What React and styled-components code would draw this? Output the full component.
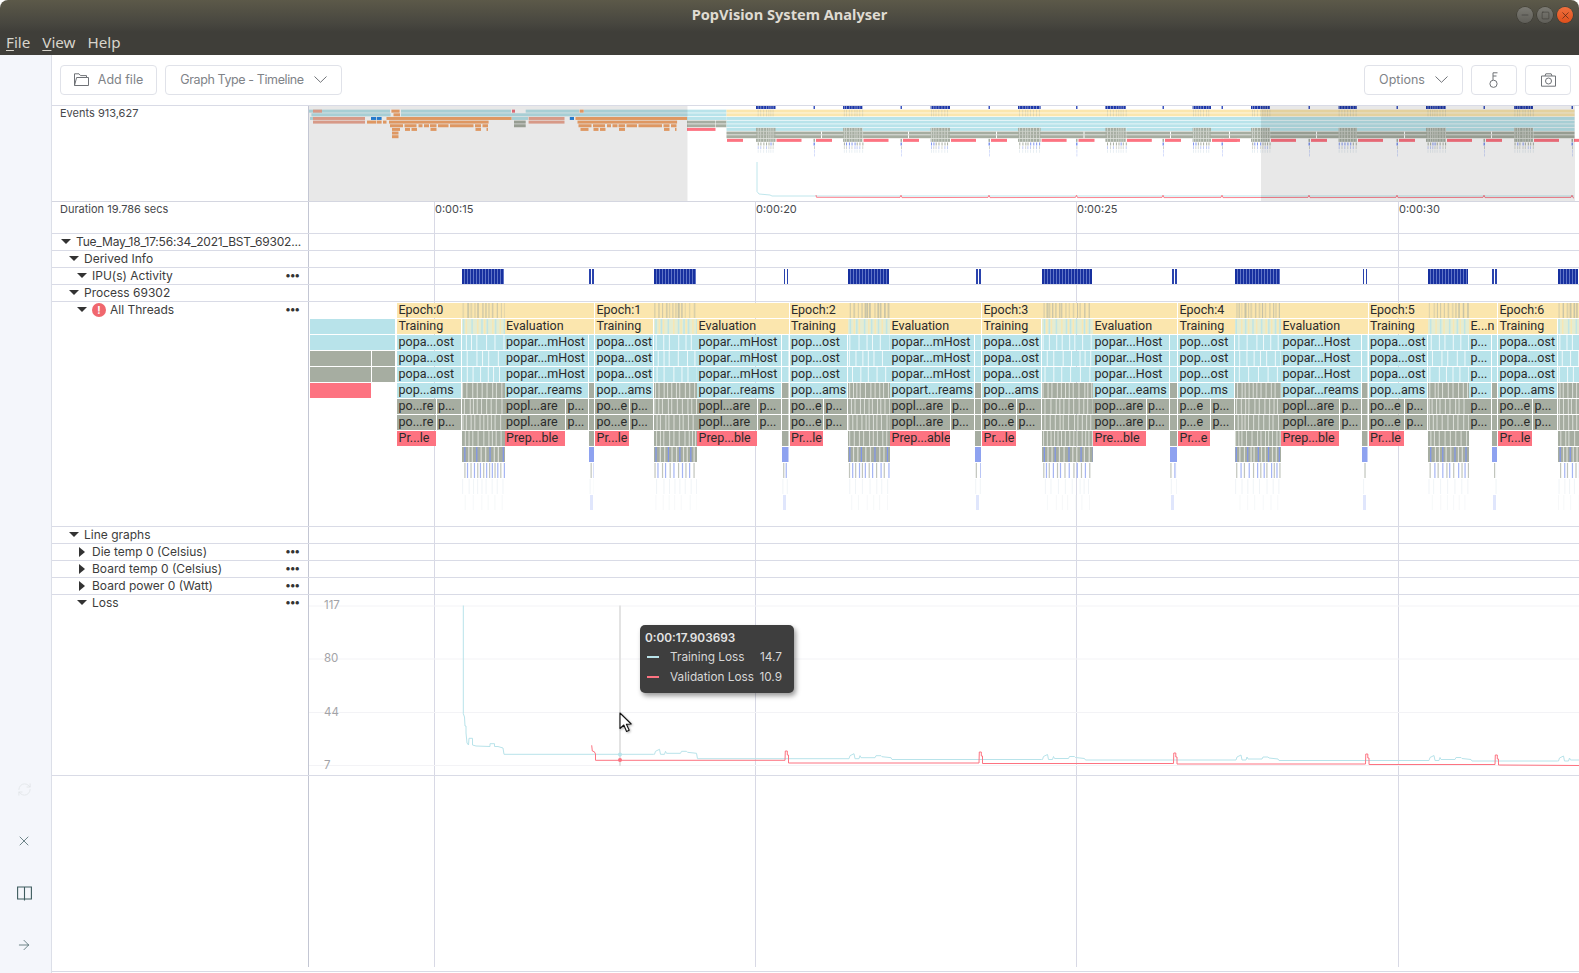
import React from 'react';
import styled, { createGlobalStyle } from 'styled-components';
import { Minus, Square, X, RefreshCw, ArrowRight } from 'lucide-react';

const CHART_X = 309;

const GlobalStyle = createGlobalStyle`
    html, body {
        margin: 0;
        padding: 0;
        background: #fff;
        overflow: hidden;
    }
    * { box-sizing: border-box; }
`;

const Root = styled.div`
    width: 1579px;
    height: 973px;
    display: flex;
    flex-direction: column;
    font-family: Inter, "Liberation Sans", sans-serif;
    color: #3c3c3c;
`;

const TitleBar = styled.div`
    height: 55px;
    flex: none;
    display: flex;
    flex-direction: column;
    border-radius: 8px 8px 0 0;
    background: linear-gradient(#5c5949 0, #47463f 24px, #3f3e39 32px);
`;

const TitleRow = styled.div`
    height: 30px;
    padding-bottom: 2px;
    position: relative;
    display: flex;
    align-items: center;
    justify-content: center;
    font-family: "Noto Sans", sans-serif;
    font-weight: 700;
    font-size: 14.6px;
    color: #dfdbd2;
`;

const WindowButtons = styled.div`
    position: absolute;
    right: 6px;
    top: 7px;
    display: flex;
    gap: 4px;
`;

const WindowButton = styled.div`
    width: 16px;
    height: 16px;
    border-radius: 50%;
    display: flex;
    align-items: center;
    justify-content: center;
    color: ${p => (p.$close ? '#4a2416' : '#3c3b36')};
    background: ${p => (p.$close ? 'linear-gradient(#f0703e, #df4f1b)' : 'linear-gradient(#7b7a73, #5f5e58)')};
    box-shadow: 0 0 0 0.5px rgba(0, 0, 0, 0.35);
`;

const MenuBar = styled.div`
    flex: 1;
    display: flex;
    align-items: center;
    gap: 12px;
    padding: 0 0 2px 6px;
    font-family: "Noto Sans", sans-serif;
    font-size: 15.2px;
    color: #d8d5cc;

    & u { text-underline-offset: 2px; }
`;

const Body = styled.div`
    flex: 1;
    display: flex;
    min-height: 0;
`;

const Sidebar = styled.div`
    width: 52px;
    flex: none;
    background: #f4f6fb;
    border-right: 1px solid #dcdfe8;
    display: flex;
    flex-direction: column;
    align-items: center;
    justify-content: flex-end;
    gap: 32px;
    padding: 0 3px 18px 0;
    color: #3d5b5e;
`;

const SideIcon = styled.div`
    height: 20px;
    display: flex;
    align-items: center;
    color: ${p => (p.$muted ? '#dfe3e6' : 'inherit')};
`;

const Main = styled.div`
    flex: 1;
    min-width: 0;
    display: flex;
    flex-direction: column;
`;

const Toolbar = styled.div`
    height: 51px;
    flex: none;
    display: flex;
    align-items: flex-start;
    padding: 10px 8px 0;
    gap: 8px;
    border-bottom: 1px solid #d9dbe6;
`;

const Spacer = styled.div`
    flex: 1;
`;

const ToolButton = styled.div`
    height: 30px;
    width: ${p => p.$w}px;
    padding-bottom: 1px;
    border: 1px solid #e0e2e9;
    border-radius: 4px;
    display: flex;
    align-items: center;
    justify-content: center;
    gap: ${p => p.$gap || 0}px;
    font-size: 12.5px;
    letter-spacing: ${p => p.$spacing || 0}px;
    color: #808388;
    background: #fff;
`;

const OverviewRow = styled.div`
    height: 96px;
    flex: none;
    display: grid;
    grid-template-columns: 257px 1fr;
    border-bottom: 1px solid #d4d6e0;
`;

const InfoLabel = styled.div`
    font-size: 11px;
    padding: 0 0 0 8px;
    color: #46484c;
`;

const OverviewChart = styled.div`
    border-left: 1px solid #c3c6d3;
    margin-left: -1px;
    height: 95px;
    overflow: hidden;

    & svg { display: block; }
`;

const Tracks = styled.div`
    flex: 1;
    position: relative;
    margin-bottom: 1px;
    border-bottom: 1px solid #d9dbe6;
`;

const TimeLine = styled.div.attrs(p => ({ style: { left: p.$x - 52 } }))`
    position: absolute;
    top: 0;
    bottom: 4px;
    width: 1px;
    background: ${p => (p.$strong ? '#c3c6d3' : '#d8d9e5')};
`;

const TrackRow = styled.div`
    position: relative;
    height: ${p => p.$h}px;
    display: grid;
    grid-template-columns: 257px 1fr;
    border-bottom: 1px solid #d9dbe6;
`;

const DurationTicks = styled.div`
    position: relative;
`;

const TickLabel = styled.span.attrs(p => ({ style: { left: p.$x - CHART_X + 1 } }))`
    position: absolute;
    top: 0;
    font-size: 11px;
    color: #46484c;
`;

const LabelCell = styled.div`
    height: 15px;
    display: flex;
    align-items: center;
    gap: 5px;
    padding-left: ${p => 9 + p.$level * 8}px;
    padding-right: 9px;
    font-size: 12px;
    letter-spacing: ${p => p.$spacing || 0}px;
    color: #3c3c3c;
    white-space: nowrap;
`;

const CaretDown = styled.span`
    flex: none;
    width: 0;
    height: 0;
    border-left: 5px solid transparent;
    border-right: 5px solid transparent;
    border-top: 5px solid #333;
`;

const CaretRight = styled.span`
    flex: none;
    width: 10px;
    height: 0;
    border-top: 5px solid transparent;
    border-bottom: 5px solid transparent;
    border-left: 6px solid #333;
    margin-left: 2px;
    margin-right: -2px;
`;

const ErrorBadge = styled.span`
    flex: none;
    width: 14px;
    height: 14px;
    margin-right: -1px;
    border-radius: 50%;
    background: #f0676e;
    color: #fff;
    font-size: 10px;
    font-weight: 700;
    display: flex;
    align-items: center;
    justify-content: center;
`;

const More = styled.span`
    margin-left: auto;
    font-family: "DejaVu Sans", sans-serif;
    font-size: 4.5px;
    letter-spacing: 0.7px;
    color: #333;
`;

const Canvas = styled.div`
    position: relative;
    overflow: hidden;
`;

const Bar = styled.div.attrs(p => ({
    style: { left: p.$x - CHART_X, width: p.$w, top: 1 + p.$row * 16 },
}))`
    position: absolute;
    height: 15px;
    line-height: 14px;
    padding-left: 1.5px;
    font-family: Roboto, "Liberation Sans", sans-serif;
    font-size: 12.5px;
    white-space: nowrap;
    overflow: hidden;
    color: #2b2b2b;
    background: ${p => p.$color};
`;

const Stripes = styled.svg.attrs(p => ({
    style: { left: p.$x - CHART_X, top: 1 + p.$row * 16 },
}))`
    position: absolute;
    display: block;
`;

const IpuBlock = styled.div.attrs(p => ({ style: { left: p.$x - CHART_X, width: p.$w } }))`
    position: absolute;
    top: 1px;
    height: 15px;
    background: repeating-linear-gradient(90deg, #17309f 0 2px, #5f74c6 2px 3px);
`;

const IpuTick = styled.div.attrs(p => ({ style: { left: p.$x - CHART_X } }))`
    position: absolute;
    top: 1px;
    height: 15px;
    width: 1.5px;
    background: #2a43ad;
`;

const LossCanvas = styled.div`
    position: relative;
`;

const LossPlot = styled.svg`
    position: absolute;
    left: 0;
    top: 0;
    display: block;
`;

const AxisLabel = styled.span.attrs(p => ({ style: { top: p.$y - 594 - 8 } }))`
    position: absolute;
    left: 15px;
    font-size: 11.5px;
    line-height: 14px;
    color: #a3a3a7;
`;

const Tooltip = styled.div`
    position: absolute;
    left: ${640 - CHART_X}px;
    top: ${624 - 594}px;
    width: 154px;
    height: 68px;
    padding: 6px 5px;
    border-radius: 5px;
    background: #3e3e3e;
    box-shadow: 2px 3px 5px rgba(0, 0, 0, 0.4);
    color: #e4e4e4;
    font-size: 11.8px;
`;

const TooltipTime = styled.div`
    font-weight: 600;
    line-height: 14px;
    margin-bottom: 2px;
`;

const TooltipRow = styled.div`
    display: flex;
    align-items: center;
    height: 20px;
    color: #d8d8d8;
`;

const Swatch = styled.span`
    width: 12px;
    height: 2px;
    margin: 0 11px 0 2px;
    background: ${p => p.$color};
`;

const TooltipValue = styled.span`
    margin-left: auto;
    padding-right: 7px;
`;

const Cursor = styled.svg`
    position: absolute;
    left: ${619 - CHART_X}px;
    top: ${711 - 594}px;
    z-index: 2;
    filter: drop-shadow(1px 1px 1px rgba(0, 0, 0, 0.3));
`;

// ---- data ----

const YELLOW = '#fbe6ae';
const BLUE = '#b8e3ea';
const GRAY = '#a6ada1';
const RED = '#fd7381';
const FAINT_BLUE = '#7f95ee';

const epochs = [
    { name: 'Epoch:0', s: 397, t: 436.5, a: 461.5, b: 504.5, e: 566, c: 589, n: 595, l: ['popa...ost', 'pop...ams', 'po...re', 'Pr...le'], v: ['popar...mHost', 'popar...reams', 'popl...are', 'Prep...ble'] },
    { name: 'Epoch:1', s: 595, t: 629.5, a: 653.5, b: 697, e: 758, c: 782, n: 789.5, l: ['popa...ost', 'pop...ams', 'po...e', 'Pr...le'], v: ['popar...mHost', 'popar...reams', 'popl...are', 'Prep...ble'] },
    { name: 'Epoch:2', s: 789.5, t: 824, a: 848, b: 890, e: 950.5, c: 975, n: 982, l: ['pop...ost', 'pop...ams', 'po...e', 'Pr...le'], v: ['popar...mHost', 'popart...reams', 'popl...are', 'Prep...able'] },
    { name: 'Epoch:3', s: 982, t: 1017, a: 1041.5, b: 1093, e: 1146.5, c: 1170, n: 1178, l: ['popa...ost', 'pop...ams', 'po...e', 'Pr...le'], v: ['popar...Host', 'popar...eams', 'pop...are', 'Pre...ble'] },
    { name: 'Epoch:4', s: 1178, t: 1211, a: 1235, b: 1281, e: 1340, c: 1362, n: 1368.5, l: ['pop...ost', 'pop...ms', 'p...e', 'Pr...e'], v: ['popar...Host', 'popar...reams', 'popl...are', 'Prep...ble'] },
    { name: 'Epoch:5', s: 1368.5, t: 1405, a: 1428, b: 1469, e: null, c: 1492, n: 1498, l: ['popa...ost', 'pop...ams', 'po...e', 'Pr...le'], v: ['p...', 'p...', 'p...', null], short: 'E...n' },
    { name: 'Epoch:6', s: 1498, t: 1533, a: 1557.5, b: 1620, e: 1660, c: 1680, n: 1690, l: ['popa...ost', 'pop...ams', 'po...e', 'Pr...le'], v: ['', '', '', ''] },
];

// small seeded generator so the stripes look irregular but stay the same between renders
const seeded = seed => {
    let v = seed * 9301 + 49297;
    return () => {
        v = (v * 9301 + 49297) % 233280;
        return v / 233280;
    };
};

const stripeXs = (rnd, w, min, max) => {
    const xs = [];
    let x = rnd() * min;
    while (x < w) {
        xs.push(x);
        x += min + rnd() * (max - min);
    }
    return xs;
};

const BlockStripes = ({ x, w, seed, small }) => {
    const rnd = seeded(seed);
    const rows = [];
    const first = small ? 2 : 0;
    const rect = (key, rx, row, rw, fill, op = 1) => (
        <rect key={key} x={rx} y={(row - first) * 16} width={rw} height={15} fill={fill} opacity={op} />
    );
    if (!small) {
        stripeXs(rnd, w, 2, 5).forEach((sx, i) => rows.push(rect(`a${i}`, sx, 0, 1 + rnd(), GRAY, 0.25 + rnd() * 0.4)));
        rows.push(rect('b', 0, 1, w, '#e4ecd2'));
        stripeXs(rnd, w, 2, 6).forEach((sx, i) => rows.push(rect(`c${i}`, sx, 1, 1.5, i % 2 ? YELLOW : BLUE, 0.8)));
    }
    [2, 3, 4].forEach(r => {
        rows.push(rect(`d${r}`, 0, r, w, BLUE));
        if (!small) stripeXs(rnd, w, 5, 10).forEach((sx, i) => rows.push(rect(`e${r}${i}`, sx, r, 1, '#fff', 0.8)));
    });
    [5, 6, 7, 8].forEach(r => {
        rows.push(rect(`f${r}`, 0, r, w, GRAY));
        if (!small) stripeXs(rnd, w, 3, 6).forEach((sx, i) => rows.push(rect(`g${r}${i}`, sx, r, 1, '#e3e6e0', 0.9)));
    });
    rows.push(rect('h', 0, 9, w, small ? '#8ea2f0' : GRAY));
    if (!small) {
        stripeXs(rnd, w, 3, 5).forEach((sx, i) => rows.push(rect(`i${i}`, sx, 9, 1.2, i % 3 === 0 ? '#7c92ee' : '#dfe2dc', 0.95)));
    }
    stripeXs(rnd, w, 2.5, 5).forEach((sx, i) => rows.push(rect(`j${i}`, sx, 10, 1.2, i % 2 ? FAINT_BLUE : GRAY, 0.7)));
    stripeXs(rnd, w, 4, 8).forEach((sx, i) => rows.push(rect(`k${i}`, sx, 11, 1, '#e6edf2', 0.6)));
    if (small) rows.push(rect('l', 1, 12, Math.min(w, 3), '#ccd6fa', 0.6));
    else stripeXs(rnd, w, 5, 9).forEach((sx, i) => rows.push(rect(`m${i}`, sx, 12, 1, '#f2f5f7', 0.7)));
    return (
        <Stripes $x={x} $row={first} width={w} height={(13 - first) * 16}>
            {rows}
        </Stripes>
    );
};

const FlameChart = () => (
    <Canvas>
        <Bar $x={310} $w={85} $row={1} $color={BLUE} />
        <Bar $x={310} $w={85} $row={2} $color={BLUE} />
        <Bar $x={310} $w={61} $row={3} $color={GRAY} />
        <Bar $x={372} $w={23} $row={3} $color={GRAY} />
        <Bar $x={310} $w={61} $row={4} $color={GRAY} />
        <Bar $x={372} $w={23} $row={4} $color={GRAY} />
        <Bar $x={310} $w={61} $row={5} $color={RED} />
        {epochs.map((ep, i) => (
            <React.Fragment key={ep.name}>
                <Bar $x={ep.s} $w={ep.n - ep.s - 1} $row={0} $color={YELLOW}>{ep.name}</Bar>
                <Bar $x={ep.s} $w={ep.a - ep.s - 0.5} $row={1} $color={YELLOW}>Training</Bar>
                {[2, 3, 4].map(r => (
                    <Bar key={r} $x={ep.s} $w={ep.a - ep.s - 1} $row={r} $color={BLUE}>{ep.l[0]}</Bar>
                ))}
                <Bar $x={ep.s} $w={ep.a - ep.s - 1} $row={5} $color={BLUE}>{ep.l[1]}</Bar>
                {[6, 7].map(r => (
                    <React.Fragment key={r}>
                        <Bar $x={ep.s} $w={ep.t - ep.s - 1} $row={r} $color={GRAY}>{ep.l[2]}</Bar>
                        <Bar $x={ep.t} $w={ep.a - ep.t - 1} $row={r} $color={GRAY}>p...</Bar>
                    </React.Fragment>
                ))}
                <Bar $x={ep.s} $w={ep.t - ep.s - 1} $row={8} $color={RED}>{ep.l[3]}</Bar>
                <BlockStripes x={ep.a} w={Math.min(ep.b - ep.a, 1579 - ep.a)} seed={i + 3} />
                {ep.b < 1579 && (
                    <>
                        <Bar $x={ep.b} $w={ep.n - ep.b - 1} $row={1} $color={YELLOW}>{ep.short || 'Evaluation'}</Bar>
                        {[2, 3, 4].map(r => (
                            <Bar key={r} $x={ep.b} $w={ep.c - ep.b - 1} $row={r} $color={BLUE}>{ep.v[0]}</Bar>
                        ))}
                        <Bar $x={ep.b} $w={ep.c - ep.b - 1} $row={5} $color={BLUE}>{ep.v[1]}</Bar>
                        {[6, 7].map(r => (
                            <React.Fragment key={r}>
                                <Bar $x={ep.b} $w={(ep.e || ep.c) - ep.b - 1} $row={r} $color={GRAY}>{ep.v[2]}</Bar>
                                {ep.e && <Bar $x={ep.e} $w={ep.c - ep.e - 1} $row={r} $color={GRAY}>p...</Bar>}
                            </React.Fragment>
                        ))}
                        {ep.e && <Bar $x={ep.b} $w={ep.e - ep.b - 1} $row={8} $color={RED}>{ep.v[3]}</Bar>}
                        <BlockStripes x={ep.c} w={ep.n - ep.c - 1} seed={i + 31} small />
                    </>
                )}
            </React.Fragment>
        ))}
    </Canvas>
);

const overviewBlocks = [
    [756, 775.5], [843, 862.5], [930.6, 950], [1018, 1040.6], [1105.4, 1125.8],
    [1192.6, 1211], [1251, 1270], [1338.5, 1357], [1426, 1446], [1514, 1533],
];
const overviewTicks = [814, 901, 989, 1076.5, 1163, 1222, 1309, 1397, 1484, 1572];

const oy = row => 106 + 3.65 * row;

// orange / salmon strips of the compile phase, repeated once for the second pass
const ORANGE = '#f5a76c';
const SALMON = '#eda995';
const ORANGE_ROW_4 = [[389, 488.6]];
const ORANGE_ROW_5 = [[390, 403], [404.5, 416.5], [418.5, 422.5], [424, 429], [430, 436.5], [438, 448.5], [450, 473.5], [475, 481], [482.5, 488]];
const ORANGE_ROW_6 = [[392, 400], [405, 410], [411.5, 417], [430.5, 436.5], [475.5, 481], [486.5, 488]];

const Strip = ({ x1, x2, row, fill, opacity = 1 }) => (
    <rect x={x1} y={oy(row)} width={x2 - x1} height={3} fill={fill} opacity={opacity} />
);

const Overview = () => {
    const rnd = seeded(5);
    const shift = 188.5;
    return (
        <svg width={1270} height={95} viewBox={`${CHART_X} 106 1270 95`}>
            {[
                [309, 390, 1], [401, 511, 1], [525.7, 579, 1], [584, 726.5, 1],
                [311.4, 390.6, 2], [401, 726.5, 2],
                [310, 313, 3], [511.5, 528, 3], [687, 726.5, 3],
            ].map(([a, b, r]) => <Strip key={`${a}-${r}`} x1={a} x2={b} row={r} fill={BLUE} />)}
            {[[313, 365, 3], [313, 365, 4], [528.6, 564.5, 3], [528.6, 564.5, 4], [313, 322, 1]].map(([a, b, r]) => (
                <Strip key={`s${a}-${r}`} x1={a} x2={b} row={r} fill={SALMON} />
            ))}
            {[[386.5, 511.5, 3], [575.5, 687, 3], [367, 371, 4], [371, 376, 4], [376.7, 381.6, 4], [383, 386.5, 4], [391.4, 399.6, 1], [393.5, 400, 2], [579.6, 583.7, 1]].map(([a, b, r]) => (
                <Strip key={`o${a}-${r}`} x1={a} x2={b} row={r} fill={ORANGE} />
            ))}
            {[[371, 376, 3], [376.7, 381.6, 3], [569.8, 574, 3]].map(([a, b, r]) => (
                <Strip key={`b${a}-${r}`} x1={a} x2={b} row={r} fill="#2786e0" />
            ))}
            {[0, shift].map(d => (
                <React.Fragment key={d}>
                    {ORANGE_ROW_4.map(([a, b]) => <Strip key={a} x1={a + d} x2={Math.min(b + d, 687)} row={4} fill={ORANGE} />)}
                    {ORANGE_ROW_5.map(([a, b]) => <Strip key={a} x1={a + d} x2={b + d} row={5} fill={ORANGE} />)}
                    {ORANGE_ROW_6.map(([a, b]) => <Strip key={a} x1={a + d} x2={b + d} row={6} fill={ORANGE} />)}
                </React.Fragment>
            ))}
            <Strip x1={392} x2={398.5} row={7} fill={ORANGE} />
            <Strip x1={392} x2={398.5} row={8} fill={ORANGE} />
            <Strip x1={512} x2={515} row={1} fill="#f0737f" />
            <Strip x1={514} x2={525.7} row={4} fill={GRAY} />
            <Strip x1={514} x2={525.7} row={5} fill={GRAY} />
            <Strip x1={687} x2={715.5} row={4} fill={GRAY} />
            <Strip x1={716} x2={726.5} row={4} fill={GRAY} />
            <Strip x1={687} x2={715.5} row={5} fill={GRAY} />
            <Strip x1={716} x2={726.5} row={5} fill={GRAY} />
            <Strip x1={687} x2={715.5} row={6} fill={RED} />

            {[1, 2].map(r => <Strip key={r} x1={726.5} x2={1574.5} row={r} fill={YELLOW} />)}
            {[3, 4, 5, 6].map(r => <Strip key={r} x1={726.5} x2={1574.5} row={r} fill={BLUE} />)}
            {[7, 8].map(r => <Strip key={r} x1={726.5} x2={1574.5} row={r} fill={GRAY} />)}
            {overviewTicks.map(t => (
                <React.Fragment key={t}>
                    {[7, 8].map(r => <Strip key={r} x1={t + 7} x2={t + 8} row={r} fill="#fff" />)}
                    <Strip x1={t - 0.5} x2={t + 1} row={0} fill="#3d55c0" />
                    <Strip x1={t + 2} x2={t + 18} row={9} fill={RED} />
                    <Strip x1={t - 0.5} x2={t + 1} row={9} fill={GRAY} />
                    <Strip x1={t - 0.5} x2={t + 1} row={10} fill={FAINT_BLUE} />
                    <Strip x1={t} x2={t + 0.8} row={11} fill={GRAY} opacity={0.7} />
                    <Strip x1={t} x2={t + 0.8} row={12} fill="#ccd6fa" />
                    <Strip x1={t} x2={t + 0.8} row={13} fill="#ccd6fa" />
                </React.Fragment>
            ))}
            {overviewBlocks.map(([a, b], i) => (
                <React.Fragment key={a}>
                    <Strip x1={a - 29} x2={a - 13} row={9} fill={i ? 'none' : RED} />
                    <Strip x1={b + 1} x2={b + 26} row={9} fill={RED} />
                    <Strip x1={a} x2={b} row={0} fill="#1d37a8" />
                    {[6, 7, 8, 9].map(r => <Strip key={r} x1={a} x2={b} row={r} fill={GRAY} />)}
                    {stripeXs(rnd, b - a, 2, 3.2).map(sx => (
                        <React.Fragment key={sx}>
                            <rect x={a + sx} y={oy(0)} width={0.8} height={3} fill="#fff" opacity={0.5} />
                            {[1, 2].map(r => <rect key={r} x={a + sx} y={oy(r)} width={0.7} height={3} fill={GRAY} opacity={0.45} />)}
                            {[6, 7, 8, 9].map(r => <rect key={r} x={a + sx} y={oy(r)} width={0.7} height={3} fill="#fff" opacity={0.6} />)}
                            <rect x={a + sx} y={oy(10)} width={1} height={3} fill={Math.round(sx) % 3 ? GRAY : FAINT_BLUE} />
                            <rect x={a + sx} y={oy(11)} width={0.8} height={3} fill={Math.round(sx) % 2 ? GRAY : FAINT_BLUE} opacity={0.6} />
                            <rect x={a + sx} y={oy(12)} width={0.7} height={3} fill="#dfe8ee" />
                        </React.Fragment>
                    ))}
                </React.Fragment>
            ))}

            <polyline points={`757,162 757,191.5 759,194 770,195 772,196 1574,196`} fill="none" stroke={BLUE} strokeWidth="0.9" />
            <polyline
                points={`816,195 816.5,197.3 ${overviewTicks.slice(1).map(t => `${t - 1},197.4 ${t},195.2 ${t + 1},197.6`).join(' ')} 1574,198`}
                fill="none"
                stroke={RED}
                strokeWidth="0.9"
            />
            <rect x={CHART_X} y={106} width={378.5} height={95} fill="#000" opacity={0.09} />
            <rect x={1261} y={106} width={314} height={95} fill="#000" opacity={0.09} />
        </svg>
    );
};

const lossHump = (x, y) => [
    [x + 1, y], [x + 2, y - 3], [x + 6, y - 5], [x + 7, y], [x + 11, y], [x + 12, y - 3], [x + 13, y - 1],
    [x + 27, y - 1], [x + 28, y - 3], [x + 33, y - 3], [x + 34, y - 2], [x + 43, y - 1],
];

const trainingLoss = () => {
    let pts = [
        [463.3, 604.5], [463.3, 712.7], [464.5, 716], [465, 725], [466, 725], [466, 732], [467, 742], [468.5, 744],
        [469, 737.3], [472.5, 737.3], [472.5, 744], [476, 745], [490, 745.5], [490, 742.7], [494.5, 742.7],
        [494.5, 745.5], [498, 745.5], [503, 747], [504, 753.3],
    ];
    const levels = [753.3, 757.7, 758.5, 759, 759.5, 760];
    epochs.slice(1).forEach((ep, i) => {
        const y = levels[i];
        pts = pts.concat([[ep.a, y]], lossHump(ep.a, y), [[ep.a + 44, levels[i + 1] || 760]]);
    });
    return pts.map(p => p.join(',')).join(' ');
};

const validationLoss = () => {
    let pts = [[591.7, 744.3]];
    const bumps = [592, 785, 979, 1173.5, 1365.5, 1495];
    const levels = [759.3, 762, 762.5, 763, 763.5, 764, 764.5];
    bumps.forEach((x, i) => {
        if (i > 0) pts = pts.concat([[x, levels[i - 1]], [x + 0.3, 749 + i], [x + 2.3, 749 + i], [x + 2.3, 753 + i]]);
        else pts = pts.concat([[592.3, 750], [594.3, 750.7]]);
        pts = pts.concat([[x + 3.5, 753 + i], [x + 3.5, levels[i]]]);
    });
    pts.push([1579, 764.5]);
    return pts.map(p => p.join(',')).join(' ');
};

const LossChart = () => (
    <LossCanvas>
        <LossPlot width={1270} height={180} viewBox={`${CHART_X} 594 1270 180`}>
            {[605, 658, 711.5, 764.5].map(y => (
                <line key={y} x1={CHART_X} x2={1579} y1={y} y2={y} stroke="#f3f3f6" strokeWidth="1" />
            ))}
            <line x1={620} x2={620} y1={604.5} y2={765} stroke="#e3e3e3" strokeWidth="2" />
            <polyline points={trainingLoss()} fill="none" stroke="#b8e3ea" strokeWidth="1" />
            <polyline points={validationLoss()} fill="none" stroke="#fd7381" strokeWidth="1" />
            <circle cx={620} cy={753.5} r={2} fill="#b8e3ea" />
            <circle cx={620} cy={759} r={2} fill="#fd7381" />
        </LossPlot>
        <AxisLabel $y={605}>117</AxisLabel>
        <AxisLabel $y={658}>80</AxisLabel>
        <AxisLabel $y={711.5}>44</AxisLabel>
        <AxisLabel $y={764.5}>7</AxisLabel>
        <Tooltip>
            <TooltipTime>0:00:17.903693</TooltipTime>
            <TooltipRow><Swatch $color="#b8e3ea" />Training Loss<TooltipValue>14.7</TooltipValue></TooltipRow>
            <TooltipRow><Swatch $color="#fd7381" />Validation Loss<TooltipValue>10.9</TooltipValue></TooltipRow>
        </Tooltip>
        <Cursor width="14" height="21" viewBox="0 0 14 21">
            <path d="M1 1 L1 16.5 L4.8 13 L7.6 19.5 L10.2 18.3 L7.4 12.2 L12.2 12 Z" fill="#fff" stroke="#111" strokeWidth="1.1" strokeLinejoin="round" />
        </Cursor>
    </LossCanvas>
);

const FolderIcon = () => (
    <svg width="15" height="13" viewBox="0 0 15 13" fill="none" stroke="#6f7277" strokeWidth="1">
        <path d="M0.5 12.5 V0.8 H5 L6.5 2.6 H12.5 V4.5" />
        <path d="M0.5 12.5 L2.6 4.5 H14.5 V12.5 Z" />
    </svg>
);

const Chevron = () => (
    <svg width="13" height="7" viewBox="0 0 13 7" fill="none" stroke="#6f7277" strokeWidth="1">
        <path d="M0.5 0.5 L6.5 6.3 L12.5 0.5" />
    </svg>
);

const SensorIcon = () => (
    <svg width="10" height="16" viewBox="0 0 10 16" fill="none" stroke="#6f7277" strokeWidth="1">
        <circle cx="4.5" cy="11.8" r="3.6" />
        <path d="M4 8 V0.8 H8.5 M4 4 H7.5" />
    </svg>
);

const CameraIcon = () => (
    <svg width="15" height="14" viewBox="0 0 15 14" fill="none" stroke="#6f7277" strokeWidth="1">
        <path d="M0.5 3 H14.5 V13.2 H0.5 Z" />
        <path d="M4 3 L4.8 0.8 H10.2 L11 3" />
        <circle cx="7.5" cy="8" r="3" />
    </svg>
);

const BookIcon = () => (
    <svg width="15" height="15" viewBox="0 0 15 15" fill="none" stroke="currentColor" strokeWidth="1.1">
        <path d="M0.6 1 H14.4 V13 H0.6 Z M7.5 1 V14.4" />
    </svg>
);

const Label = ({ level, open, closed, children, more, error, spacing }) => (
    <LabelCell $level={level} $spacing={spacing}>
        {open && <CaretDown />}
        {closed && <CaretRight />}
        {error && <ErrorBadge>!</ErrorBadge>}
        {children}
        {more && <More>●●●</More>}
    </LabelCell>
);

const ticks = [434, 755, 1076, 1398];

const App = () => (
    <Root>
        <GlobalStyle />
        <TitleBar>
            <TitleRow>
                PopVision System Analyser
                <WindowButtons>
                    <WindowButton><Minus size={10} strokeWidth={1.5} /></WindowButton>
                    <WindowButton><Square size={9} strokeWidth={1.5} /></WindowButton>
                    <WindowButton $close><X size={11} strokeWidth={1.5} /></WindowButton>
                </WindowButtons>
            </TitleRow>
            <MenuBar>
                <span><u>F</u>ile</span>
                <span><u>V</u>iew</span>
                <span>Help</span>
            </MenuBar>
        </TitleBar>
        <Body>
            <Sidebar>
                <SideIcon $muted><RefreshCw size={15} strokeWidth={1.2} /></SideIcon>
                <SideIcon><X size={16} strokeWidth={1.1} /></SideIcon>
                <SideIcon><BookIcon /></SideIcon>
                <SideIcon><ArrowRight size={16} strokeWidth={1.1} /></SideIcon>
            </Sidebar>
            <Main>
                <Toolbar>
                    <ToolButton $w={97} $gap={9}><FolderIcon />Add file</ToolButton>
                    <ToolButton $w={177} $gap={10} $spacing={-0.4}>Graph Type - Timeline<Chevron /></ToolButton>
                    <Spacer />
                    <ToolButton $w={99} $gap={10}>Options<Chevron /></ToolButton>
                    <ToolButton $w={46}><SensorIcon /></ToolButton>
                    <ToolButton $w={46}><CameraIcon /></ToolButton>
                </Toolbar>
                <OverviewRow>
                    <InfoLabel>Events 913,627</InfoLabel>
                    <OverviewChart><Overview /></OverviewChart>
                </OverviewRow>
                <Tracks>
                    {ticks.map(x => <TimeLine key={x} $x={x} />)}
                    <TimeLine $x={308} $strong />
                    <TrackRow $h={32}>
                        <InfoLabel>Duration 19.786 secs</InfoLabel>
                        <DurationTicks>
                            <TickLabel $x={434}>0:00:15</TickLabel>
                            <TickLabel $x={755}>0:00:20</TickLabel>
                            <TickLabel $x={1076}>0:00:25</TickLabel>
                            <TickLabel $x={1398}>0:00:30</TickLabel>
                        </DurationTicks>
                    </TrackRow>
                    <TrackRow $h={17}><Label level={0} open spacing={-0.2}>Tue_May_18_17:56:34_2021_BST_69302...</Label></TrackRow>
                    <TrackRow $h={17}><Label level={1} open>Derived Info</Label></TrackRow>
                    <TrackRow $h={17}>
                        <Label level={2} open more>IPU(s) Activity</Label>
                        <Canvas>
                            {epochs.map(ep => (
                                <React.Fragment key={ep.name}>
                                    <IpuBlock $x={ep.a} $w={Math.min(ep.b, 1579) - ep.a - 1} />
                                    {ep.b < 1579 && <IpuTick $x={ep.n - 6} />}
                                    {ep.b < 1579 && <IpuTick $x={ep.n - 3} />}
                                </React.Fragment>
                            ))}
                        </Canvas>
                    </TrackRow>
                    <TrackRow $h={17}><Label level={1} open>Process 69302</Label></TrackRow>
                    <TrackRow $h={225}>
                        <Label level={2} open more error>All Threads</Label>
                        <FlameChart />
                    </TrackRow>
                    <TrackRow $h={17}><Label level={1} open>Line graphs</Label></TrackRow>
                    <TrackRow $h={17}><Label level={2} closed more>Die temp 0 (Celsius)</Label></TrackRow>
                    <TrackRow $h={17}><Label level={2} closed more>Board temp 0 (Celsius)</Label></TrackRow>
                    <TrackRow $h={17}><Label level={2} closed more>Board power 0 (Watt)</Label></TrackRow>
                    <TrackRow $h={181}>
                        <Label level={2} open more>Loss</Label>
                        <LossChart />
                    </TrackRow>
                </Tracks>
            </Main>
        </Body>
    </Root>
);

export default App;
